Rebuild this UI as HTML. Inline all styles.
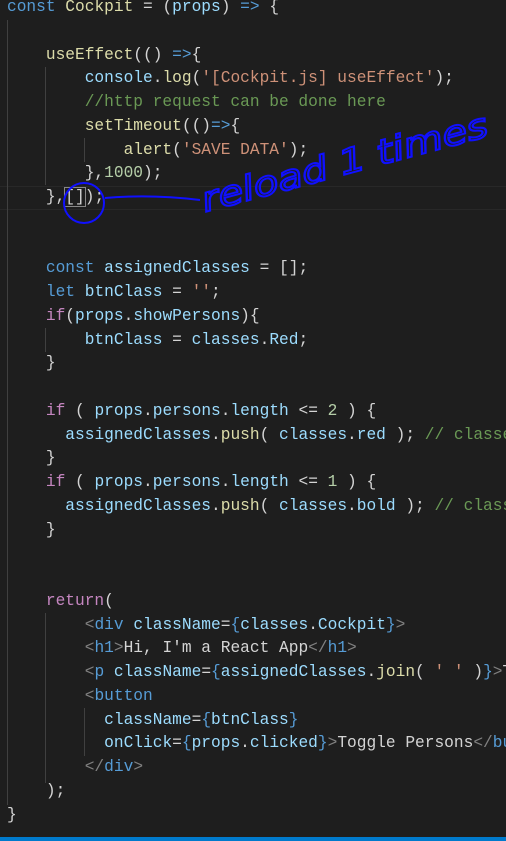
<!DOCTYPE html>
<html><head><meta charset="utf-8"><style>
html,body{margin:0;padding:0;background:#1e1e1e;width:506px;height:841px;overflow:hidden;position:relative}
.code{position:absolute;left:7px;top:-4px;width:499px;overflow:hidden;font-family:"Liberation Mono",monospace;font-size:16.2px;line-height:23.75px;color:#d4d4d4;white-space:pre}
.k{color:#569cd6}.f{color:#dcdcaa}.v{color:#9cdcfe}.s{color:#ce9178}.c{color:#6a9955}.n{color:#b5cea8}.r{color:#c586c0}.g{color:#808080}
.guide{position:absolute;width:1px;background:#404040}
.cur{position:absolute;left:0;width:506px;height:22px;top:186px;border-top:1px solid #282828;border-bottom:1px solid #282828}
.bm{outline:1px solid #888}
.bar{position:absolute;left:0;bottom:0;width:506px;height:4px;background:#007acc}
</style></head><body>
<div class="cur"></div>
<div class="guide" style="left:7px;top:20px;height:785px"></div>
<div class="guide" style="left:45px;top:67px;height:118px"></div>
<div class="guide" style="left:84px;top:138px;height:24px"></div>
<div class="guide" style="left:45px;top:328px;height:24px"></div>
<div class="guide" style="left:45px;top:613px;height:170px"></div>
<div class="guide" style="left:84px;top:708px;height:48px"></div>
<div class="code"><span class="k">const</span> <span class="f">Cockpit</span> = (<span class="v">props</span>) <span class="k">=&gt;</span> {

    <span class="f">useEffect</span>(() <span class="k">=&gt;</span>{
        <span class="v">console</span>.<span class="f">log</span>(<span class="s">'[Cockpit.js] useEffect'</span>);
        <span class="c">//http request can be done here</span>
        <span class="f">setTimeout</span>(()<span class="k">=&gt;</span>{
            <span class="f">alert</span>(<span class="s">'SAVE DATA'</span>);
        },<span class="n">1000</span>);
    },<span class="bm">[]</span>);


    <span class="k">const</span> <span class="v">assignedClasses</span> = [];
    <span class="k">let</span> <span class="v">btnClass</span> = <span class="s">''</span>;
    <span class="r">if</span>(<span class="v">props</span>.<span class="v">showPersons</span>){
        <span class="v">btnClass</span> = <span class="v">classes</span>.<span class="v">Red</span>;
    }

    <span class="r">if</span> ( <span class="v">props</span>.<span class="v">persons</span>.<span class="v">length</span> &lt;= <span class="n">2</span> ) {
      <span class="v">assignedClasses</span>.<span class="f">push</span>( <span class="v">classes</span>.<span class="v">red</span> ); <span class="c">// classes = ['red']</span>
    }
    <span class="r">if</span> ( <span class="v">props</span>.<span class="v">persons</span>.<span class="v">length</span> &lt;= <span class="n">1</span> ) {
      <span class="v">assignedClasses</span>.<span class="f">push</span>( <span class="v">classes</span>.<span class="v">bold</span> ); <span class="c">// classes = ['red', 'bold']</span>
    }


    <span class="r">return</span>(
        <span class="g">&lt;</span><span class="k">div</span> <span class="v">className</span>=<span class="k">{</span><span class="v">classes</span>.<span class="v">Cockpit</span><span class="k">}</span><span class="g">&gt;</span>
        <span class="g">&lt;</span><span class="k">h1</span><span class="g">&gt;</span>Hi, I'm a React App<span class="g">&lt;/</span><span class="k">h1</span><span class="g">&gt;</span>
        <span class="g">&lt;</span><span class="k">p</span> <span class="v">className</span>=<span class="k">{</span><span class="v">assignedClasses</span>.<span class="f">join</span>( <span class="s">' '</span> )<span class="k">}</span><span class="g">&gt;</span>This is really working!<span class="g">&lt;/</span><span class="k">p</span><span class="g">&gt;</span>
        <span class="g">&lt;</span><span class="k">button</span>
          <span class="v">className</span>=<span class="k">{</span><span class="v">btnClass</span><span class="k">}</span>
          <span class="v">onClick</span>=<span class="k">{</span><span class="v">props</span>.<span class="v">clicked</span><span class="k">}</span><span class="g">&gt;</span>Toggle Persons<span class="g">&lt;/</span><span class="k">button</span><span class="g">&gt;</span>
        <span class="g">&lt;/</span><span class="k">div</span><span class="g">&gt;</span>
    );
}</div>
<svg style="position:absolute;left:0;top:0" width="506" height="841">
<ellipse cx="84" cy="203" rx="20" ry="20" fill="none" stroke="#1010ff" stroke-width="2"/>
<path d="M105 198 Q150 194 200 200" fill="none" stroke="#1010ff" stroke-width="2"/>
<text x="205" y="212" transform="rotate(-15 205 212)" font-family="DejaVu Sans, sans-serif" font-style="italic" font-size="34" fill="none" stroke="#1010ff" stroke-width="2" textLength="295" lengthAdjust="spacingAndGlyphs">reload 1 times</text>
</svg>
<div class="bar"></div>
</body></html>
